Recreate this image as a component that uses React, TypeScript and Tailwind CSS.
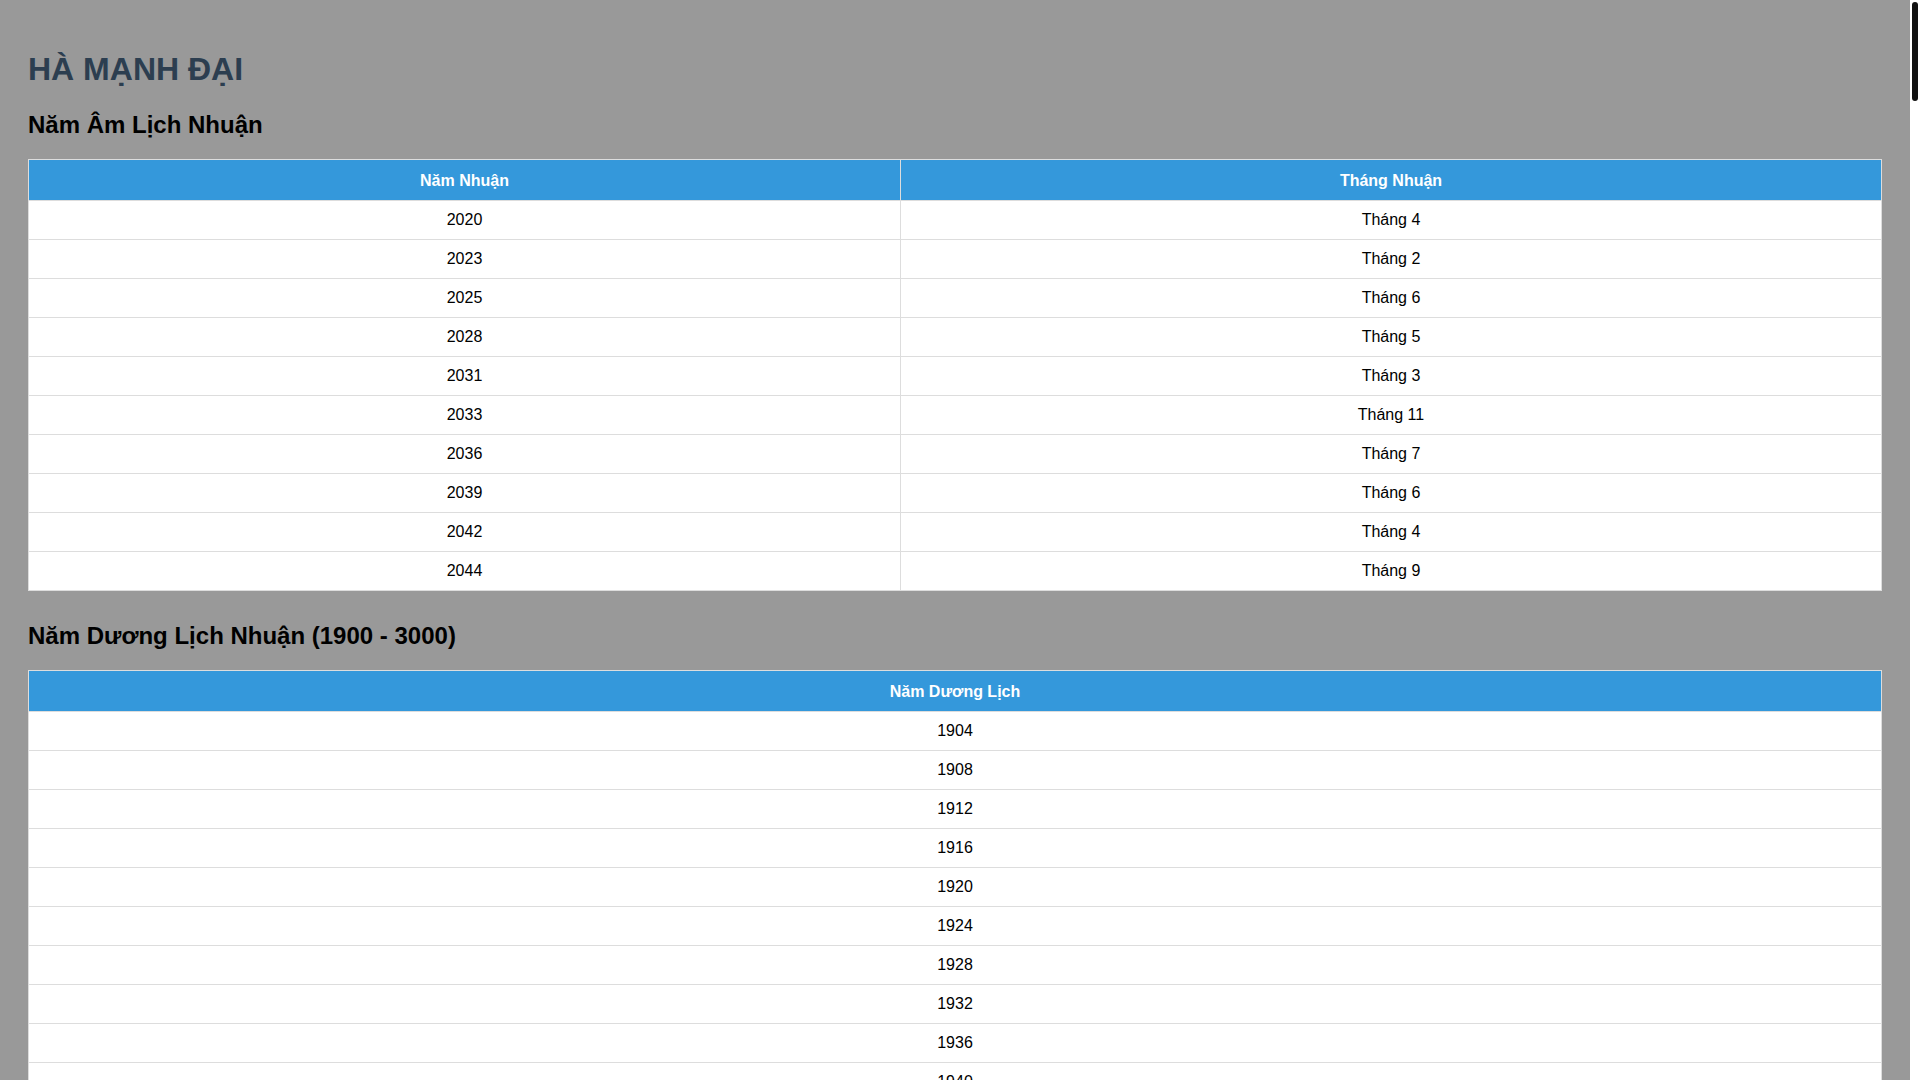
import React from "react";

const lunarLeaps: [number, number][] = [
  [2020, 4],
  [2023, 2],
  [2025, 6],
  [2028, 5],
  [2031, 3],
  [2033, 11],
  [2036, 7],
  [2039, 6],
  [2042, 4],
  [2044, 9],
];

const solarLeaps: number[] = [];
for (let y = 1900; y <= 3000; y++) {
  if ((y % 4 === 0 && y % 100 !== 0) || y % 400 === 0) solarLeaps.push(y);
}

const th = "border border-[#dddddd] bg-[#3498db] text-white font-bold text-[16px] leading-[18px] pt-[12px] pb-[10px] px-[10px] text-center";
const td = "border border-[#dddddd] bg-white text-black text-[16px] leading-[18px] py-[10px] px-[10px] text-center";

const App = () => {
  return (
    <div className="min-h-screen bg-[#999999] pr-[10px] font-['Liberation_Sans',Arial,sans-serif]">
      <div className="px-[28px] pt-[28px] pb-[28px]">
        <h1 className="mt-[23px] text-[32px] leading-[37px] font-bold text-[#2c3e50]">
          HÀ MẠNH ĐẠI
        </h1>

        {/* Lunar leap years */}
        <h2 className="mt-[23px] text-[24px] leading-[28px] font-bold text-black">
          Năm Âm Lịch Nhuận
        </h2>
        <table className="mt-[20px] w-full border-collapse table-fixed">
          <thead>
            <tr>
              <th className={`${th} w-[872px]`}>Năm Nhuận</th>
              <th className={th}>Tháng Nhuận</th>
            </tr>
          </thead>
          <tbody>
            {lunarLeaps.map(([year, month]) => (
              <tr key={year}>
                <td className={td}>{year}</td>
                <td className={td}>Tháng {month}</td>
              </tr>
            ))}
          </tbody>
        </table>

        {/* Solar leap years */}
        <h2 className="mt-[31px] text-[24px] leading-[28px] font-bold text-black">
          Năm Dương Lịch Nhuận (1900 - 3000)
        </h2>
        <table className="mt-[20px] w-full border-collapse">
          <thead>
            <tr>
              <th className={th}>Năm Dương Lịch</th>
            </tr>
          </thead>
          <tbody>
            {solarLeaps.map((year) => (
              <tr key={year}>
                <td className={td}>{year}</td>
              </tr>
            ))}
          </tbody>
        </table>
      </div>

      {/* page scrollbar */}
      <div className="fixed top-0 right-0 h-screen w-[10px] bg-white">
        <div className="mt-[2px] ml-[2px] h-[99px] w-[6px] rounded-full bg-[#111111]" />
      </div>
    </div>
  );
};

export default App;
